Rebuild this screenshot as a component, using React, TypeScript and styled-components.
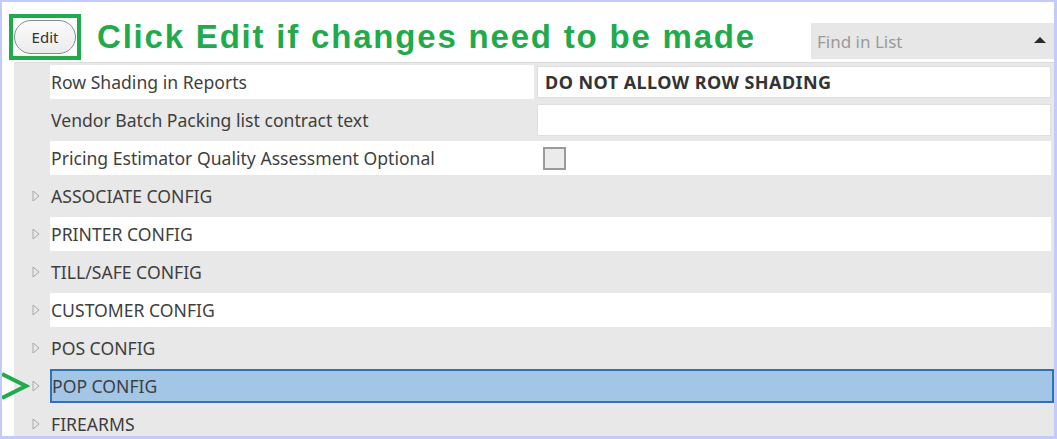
import styled, { createGlobalStyle } from "styled-components";

const GlobalStyle = createGlobalStyle`
  html, body {
    margin: 0;
    padding: 0;
    background: #ffffff;
  }
  * {
    box-sizing: border-box;
  }
`;

type Group = { label: string; shaded: boolean; selected?: boolean };

const groups: Group[] = [
  { label: "ASSOCIATE CONFIG", shaded: true },
  { label: "PRINTER CONFIG", shaded: false },
  { label: "TILL/SAFE CONFIG", shaded: true },
  { label: "CUSTOMER CONFIG", shaded: false },
  { label: "POS CONFIG", shaded: true },
  { label: "POP CONFIG", shaded: false, selected: true },
  { label: "FIREARMS", shaded: true },
];

const Expander = () => (
  <svg width="8" height="12" viewBox="0 0 8 12">
    <path d="M1 1 L7 6 L1 11 Z" fill="none" stroke="#a8a8a8" strokeWidth="1" />
  </svg>
);

const Pointer = () => (
  <svg width="30" height="30" viewBox="0 0 30 30">
    <polyline
      points="2,3 26,15 2,27"
      fill="none"
      stroke="#1faa4b"
      strokeWidth="4"
      strokeLinejoin="miter"
    />
  </svg>
);

export default function App() {
  return (
    <>
      <GlobalStyle />
      <Frame>
        <Toolbar>
          <EditHighlight>
            <EditButton>Edit</EditButton>
          </EditHighlight>
          <Hint>Click Edit if changes need to be made</Hint>
          <FindBox>
            <FindText>Find in List</FindText>
            <Caret />
          </FindBox>
        </Toolbar>

        <Grid>
          <Row>
            <Indent />
            <Label $white>Row Shading in Reports</Label>
            <ValueBox $bold>DO NOT ALLOW ROW SHADING</ValueBox>
          </Row>
          <Row>
            <Indent />
            <Label>Vendor Batch Packing list contract text</Label>
            <ValueBox />
          </Row>
          <Row>
            <Indent />
            <WideCell>
              <WideLabel>Pricing Estimator Quality Assessment Optional</WideLabel>
              <Checkbox />
            </WideCell>
          </Row>

          {groups.map((g) => (
            <Row key={g.label}>
              <Indent>
                {g.selected && (
                  <PointerWrap>
                    <Pointer />
                  </PointerWrap>
                )}
                <Expander />
              </Indent>
              <GroupCell $white={!g.shaded} $selected={g.selected}>
                {g.label}
              </GroupCell>
            </Row>
          ))}
        </Grid>
      </Frame>
    </>
  );
}

const Frame = styled.div`
  width: 1057px;
  height: 439px;
  overflow: hidden;
  border-style: solid;
  border-color: #c3cbfa;
  border-width: 2px 3px 3px 2px;
  background: #ffffff;
  font-family: "Noto Sans", "Open Sans", sans-serif;
  color: #3f3f3f;
`;

const Toolbar = styled.div`
  height: 60px;
  display: flex;
  align-items: flex-start;
  padding-left: 7px;
`;

const EditHighlight = styled.div`
  width: 72px;
  height: 46px;
  margin-top: 12px;
  border: 4px solid #1faa4b;
  display: flex;
  align-items: center;
  justify-content: center;
`;

const EditButton = styled.button`
  width: 62px;
  height: 34px;
  border-radius: 17px;
  border: 1px solid #8a8a8a;
  background: linear-gradient(#fbfbfb, #ebebeb);
  font-family: "Noto Sans", "Open Sans", sans-serif;
  font-size: 15px;
  color: #333;
  padding: 0;
`;

const Hint = styled.div`
  margin-left: 16px;
  margin-top: 16px;
  font-family: "Liberation Sans", Arial, sans-serif;
  font-weight: bold;
  font-size: 33px;
  letter-spacing: 1.8px;
  color: #1faa4b;
  white-space: nowrap;
`;

const FindBox = styled.div`
  margin-left: auto;
  margin-top: 21px;
  width: 243px;
  height: 36px;
  background: #e7e7e7;
  display: flex;
  align-items: center;
  padding: 0 8px 0 6px;
`;

const FindText = styled.span`
  font-size: 17px;
  color: #9a9a9a;
  flex: 1;
`;

const Caret = styled.span`
  width: 0;
  height: 0;
  border-left: 6px solid transparent;
  border-right: 6px solid transparent;
  border-bottom: 6px solid #2a2a2a;
  margin-top: -2px;
`;

const Grid = styled.div`
  margin-left: 12px;
  width: 1040px;
  background: #e8e8e8;
  border-top: 1px solid #dcdcdc;
  padding-right: 3px;
`;

const Row = styled.div`
  height: 38px;
  display: flex;
  align-items: stretch;
  font-size: 17.6px;
`;

const Indent = styled.div`
  position: relative;
  width: 36px;
  flex: none;
  display: flex;
  align-items: center;
  padding-left: 18px;
`;

const PointerWrap = styled.div`
  position: absolute;
  left: -14px;
  top: 4px;
`;

const Label = styled.div<{ $white?: boolean }>`
  width: 484px;
  flex: none;
  margin: 2px 0;
  padding-left: 1px;
  display: flex;
  align-items: center;
  background: ${(p) => (p.$white ? "#ffffff" : "transparent")};
`;

const ValueBox = styled.div<{ $bold?: boolean }>`
  flex: 1;
  margin: 3px 0 3px 3px;
  background: #ffffff;
  border: 1px solid #dedede;
  display: flex;
  align-items: center;
  padding-left: 7px;
  font-weight: ${(p) => (p.$bold ? 700 : 400)};
  font-size: ${(p) => (p.$bold ? "18px" : "inherit")};
  letter-spacing: ${(p) => (p.$bold ? "0.45px" : "normal")};
  color: #333;
`;

const WideCell = styled.div`
  flex: 1;
  margin: 2px 0;
  background: #ffffff;
  display: flex;
  align-items: center;
  padding-left: 1px;
`;

const WideLabel = styled.span`
  width: 492px;
`;

const Checkbox = styled.span`
  width: 23px;
  height: 23px;
  border: 2px solid #9a9a9a;
  background: #ebebeb;
`;

const GroupCell = styled.div<{ $white?: boolean; $selected?: boolean }>`
  flex: 1;
  margin: 2px 0;
  padding-left: ${(p) => (p.$selected ? "0" : "1px")};
  display: flex;
  align-items: center;
  background: ${(p) =>
    p.$selected ? "#a3c6e6" : p.$white ? "#ffffff" : "transparent"};
  border: ${(p) => (p.$selected ? "2px solid #2f72b5" : "none")};
  margin-right: ${(p) => (p.$selected ? "-3px" : "0")};
`;
